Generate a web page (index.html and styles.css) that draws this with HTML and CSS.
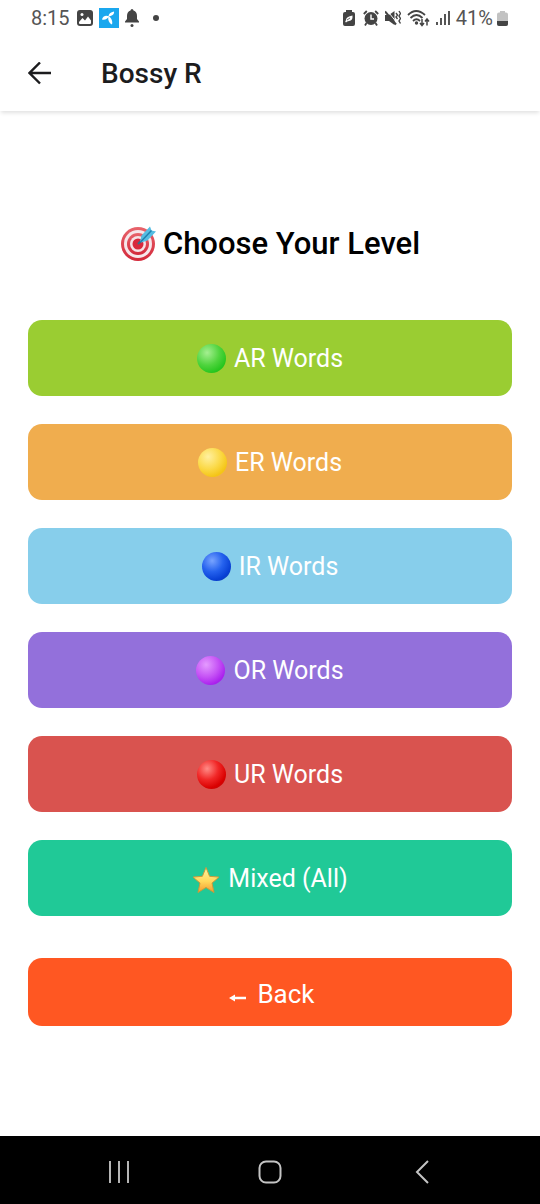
FILE: index.html
```html
<!DOCTYPE html>
<html lang="en">
<head>
<meta charset="utf-8">
<meta name="viewport" content="width=device-width, initial-scale=1">
<title>Bossy R</title>
<link rel="stylesheet" href="styles.css">
</head>
<body>
<div class="status">
  <div class="status-group status-left">
    <span class="status-text">8:15</span>
    <svg width="16" height="16" viewBox="0 0 16 16"><rect width="16" height="16" rx="3" fill="#444"/><path d="M2 12l3.500-4 2.500 2.500 3-4 3 4V13q0 1-1 1H3q-1 0-1-1z" fill="#fff"/><circle cx="5" cy="4.500" r="1.500" fill="#fff"/></svg>
    <svg width="20" height="20" viewBox="0 0 20 20"><rect width="20" height="20" fill="#1aa7ee"/><g fill="#fff"><path d="M9.500 8.500C9.500 6 11.500 4 15 3.500c.5 2.500-1.500 4.500-5.500 5z"/><path d="M10 8.300C7 6.800 3.500 8 3 11.500c3 .8 5.500-.7 7-3.200z"/><path d="M9.500 8c2.500 1.500 4.500 5 3.500 8.500-2.800-1-4.500-5-3.500-8.500z"/></g></svg>
    <svg width="14" height="18" viewBox="0 0 14 18" fill="#444"><path d="M7 0q1.300 0 1.500 1.500Q12 2.500 12 7v3l2 2.500v1H0v-1L2 10V7q0-4.500 3.500-5.500Q5.700 0 7 0z"/><circle cx="7" cy="16.500" r="1.500"/></svg>
    <svg class="status-dot" width="6" height="6" viewBox="0 0 6 6"><circle cx="3" cy="3" r="3" fill="#444"/></svg>
  </div>
  <div class="status-group status-right">
    <svg class="saver" width="12" height="16" viewBox="0 0 12 16"><path d="M3 2V0h6v2h1q2 0 2 2v10q0 2-2 2H2q-2 0-2-2V4q0-2 2-2z" fill="#444"/><path d="M9.500 5.500q.5 5-3.500 5.500-2 0-3 1.500l-.8-.8.8-1.700q0-3.500 6.500-4.500z" fill="#fff"/><path d="M4 10l3-2" stroke="#444" stroke-width=".8"/></svg>
    <svg width="16" height="16" viewBox="0 0 16 16"><circle cx="8" cy="8.500" r="6.500" fill="#444"/><path d="M.8 4l3-3M15.200 4l-3-3M3.500 13l-1.500 2.500M12.500 13l1.500 2.500" stroke="#444" stroke-width="1.800"/><path d="M8 4.500V9h3" fill="none" stroke="#fff" stroke-width="1.400"/></svg>
    <svg width="16" height="16" viewBox="0 0 16 16"><path d="M0 5h4l5.500-4v14L4 11H0z" fill="#444"/><path d="M2.500 1l8 10" stroke="#fff" stroke-width="1"/><path d="M0 1.500l11 13" stroke="#444" stroke-width="2"/><path d="M11 3l1.500 2L11 7l1.500 2M14 1l1.500 2.500L14 6l1.500 2.500L14 11l1.500 2.500" fill="none" stroke="#444" stroke-width="1.400"/></svg>
    <svg width="23" height="18" viewBox="0 0 23 18" fill="none" stroke="#444" stroke-width="1.800"><path d="M1 6q8-8 17 0M3.500 9q6-6 12 0M6 12q3.500-3.500 7 0"/><circle cx="9.500" cy="14" r=".8"/><path d="M15 10v6M13 14l2 2.500 2-2.500M20 16.500V10M18 12.500l2-2.500 2 2.500" stroke-width="1.500"/></svg>
    <svg width="14" height="16" viewBox="0 0 14 16" fill="none" stroke="#444" stroke-width="1.800"><path d="M1 12v3M5 8v7M9 4v11M13 1v14"/></svg>
    <span class="status-text">41%</span>
    <svg class="battery" width="11" height="15" viewBox="0 0 11 15"><path d="M3 1.500V0h5v1.500h1q2 0 2 2V13q0 2-2 2H2q-2 0-2-2V3.500q0-2 2-2z" fill="#c2c2c2"/><path d="M0 10h11v3q0 2-2 2H2q-2 0-2-2z" fill="#444"/></svg>
  </div>
</div>
<header class="app-bar">
  <button class="icon-button" type="button" aria-label="Go back"><svg width="24" height="24" viewBox="0 0 24 24" fill="none" stroke="#1c1c1e" stroke-width="2.400"><path d="M23 11H2M12 .5L1.500 11 12 21.500"/></svg></button>
  <h1 class="app-title">Bossy R</h1>
</header>
<main class="content">
  <h2 class="heading">
    <svg width="36" height="36" viewBox="0 0 36 36"><defs><linearGradient id="ring" x2="0" y2="1"><stop stop-color="#e8646c"/><stop offset="1" stop-color="#d3283a"/></linearGradient></defs><circle cx="18" cy="18" r="17" fill="url(#ring)"/><circle cx="18" cy="18" r="14" fill="#f6e6ea"/><circle cx="18" cy="18" r="11" fill="url(#ring)"/><circle cx="18" cy="18" r="8" fill="#f6e3e7"/><circle cx="18" cy="18" r="5.500" fill="#d8293c"/><path d="M18 18L25 11" stroke="#32718f" stroke-width="2"/><path d="M20 15.500l1.500-6L30 .5l1.500 4 4.500 1-8.500 9-6 2z" fill="#55bde2"/><path d="M20.500 16L31.500 4.500" stroke="#207fae" stroke-width="1.500"/></svg>
    <span>Choose Your Level</span>
  </h2>
  <div class="levels">
    <button class="button level green" type="button"><span class="ball ball-green"></span><span>AR Words</span></button>
    <button class="button level amber" type="button"><span class="ball ball-yellow"></span><span>ER Words</span></button>
    <button class="button level sky" type="button"><span class="ball ball-blue"></span><span>IR Words</span></button>
    <button class="button level violet" type="button"><span class="ball ball-purple"></span><span>OR Words</span></button>
    <button class="button level red" type="button"><span class="ball ball-red"></span><span>UR Words</span></button>
    <button class="button level teal" type="button"><svg width="28" height="28" viewBox="0 0 28 28"><defs><linearGradient id="gold" x2="0" y2="1"><stop stop-color="#fff3a0"/><stop offset=".55" stop-color="#ffd95c"/><stop offset="1" stop-color="#f39a2e"/></linearGradient></defs><path d="M14 2.500l3.600 8.800 9.400.8-7 6 2 9.400-8-5-8 5 2-9.400-7-6 9.400-.8z" fill="url(#gold)" stroke="#c99a3c" stroke-linejoin="round"/></svg><span>Mixed (All)</span></button>
  </div>
  <button class="button back" type="button"><svg class="back-arrow" width="18" height="10" viewBox="0 0 18 10" fill="#fff"><path d="M0 5l6-3.500v2.200h11v2.600H6v2.200z"/></svg><span>Back</span></button>
</main>
<nav class="system-nav">
  <button class="nav-button" type="button" aria-label="Recent apps"><svg width="24" height="24" viewBox="0 0 24 24" stroke="#b5b5b5" stroke-width="2"><path d="M3 1v22M12 1v22M21 1v22"/></svg></button>
  <button class="nav-button" type="button" aria-label="Home"><svg width="24" height="24" viewBox="0 0 24 24"><rect x="1.500" y="1.500" width="21" height="21" rx="6.500" fill="none" stroke="#c4c4c4" stroke-width="2"/></svg></button>
  <button class="nav-button" type="button" aria-label="Back"><svg width="24" height="24" viewBox="0 0 24 24"><path d="M19 1L8 12l11 11" fill="none" stroke="#c4c4c4" stroke-width="2"/></svg></button>
</nav>
</body>
</html>
```
FILE: styles.css
```css
* { box-sizing: border-box; }
body {
  margin: 0;
  min-height: 100vh;
  display: flex;
  flex-direction: column;
  background: #fff;
  font-family: Roboto, "Liberation Sans", sans-serif;
}
svg { display: block; flex: none; }
button { border: 0; margin: 0; padding: 0; font: inherit; background: none; cursor: pointer; }
.status {
  display: flex;
  justify-content: space-between;
  height: 36px;
  padding: 0 32px;
}
.status-group { display: flex; align-items: center; gap: 6px; }
.status-left .status-text { margin-right: 1px; }
.status-left { margin-left: -1px; }
.status-dot { margin-left: 8px; }
.saver { margin-right: 2px; }
.battery { margin-left: -2px; }
.status-text { font-size: 20px; line-height: 24px; color: #555; }
.app-bar {
  display: flex;
  align-items: center;
  gap: 49px;
  height: 75px;
  padding: 0 28px;
  box-shadow: 0 3px 4px -1px #0000001f;
}
.app-title { margin: 0; font-size: 28px; line-height: 36px; font-weight: 500; color: #1c1c1e; }
.content {
  flex: 1;
  display: flex;
  flex-direction: column;
  justify-content: center;
  padding: 2px 28px 0;
}
.heading {
  display: flex;
  align-items: center;
  justify-content: center;
  gap: 7px;
  margin: 0 0 56px;
  font-size: 31px;
  line-height: 40px;
  font-weight: 500;
  color: #000;
}
.levels { display: flex; flex-direction: column; gap: 28px; }
.button {
  display: flex;
  align-items: center;
  justify-content: center;
  gap: 8px;
  width: 100%;
  border-radius: 14px;
  color: #fff;
  line-height: 32px;
}
.level { padding: 23px 16px 21px; font-size: 25px; }
.back { margin-top: 42px; padding: 20px 14px 16px 18px; gap: 10px; font-size: 26px; }
.back-arrow { margin-top: 8px; }
.green { background: #9acd32; }
.amber { background: #f0ad4e; }
.sky { background: #87ceeb; }
.violet { background: #9370db; }
.red { background: #d9534f; }
.teal { background: #20c997; }
.back { background: #ff5722; }
.ball { width: 29px; height: 29px; border-radius: 50%; }
.ball-green { background: radial-gradient(circle at 35% 30%, #a5ef91, #50d43e 45%, #25c51d 75%, #43bd35); }
.ball-yellow { background: radial-gradient(circle at 35% 30%, #fff0a0, #fbd947 45%, #f4c414 75%, #f5d650); }
.ball-blue { background: radial-gradient(circle at 35% 30%, #78a4ff, #2562ee 40%, #0840d5 70%, #163899); }
.ball-purple { background: radial-gradient(circle at 35% 30%, #e49bff, #c552f5 45%, #a91fed 75%, #a648dc); }
.ball-red { background: radial-gradient(circle at 35% 30%, #ff8b86, #f12828 40%, #d90000 70%, #b51010); }
.system-nav {
  display: flex;
  align-items: center;
  height: 68px;
  padding: 4px 44px 0;
  background: #000;
}
.nav-button { flex: 1; display: flex; justify-content: center; }
```
